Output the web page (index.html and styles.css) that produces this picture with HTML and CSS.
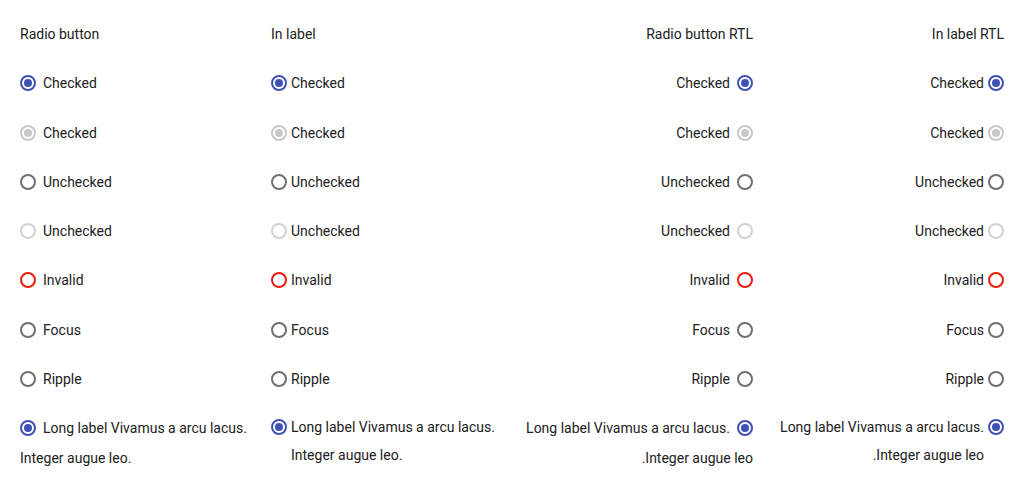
FILE: index.html
```html
<!DOCTYPE html>
<html>
<head>
<meta charset="utf-8">
<link rel="stylesheet" href="styles.css">
</head>
<body>
<div class="grid">
  <section class="col">
    <div class="title">Radio button</div>
    <div class="row"><span class="radio checked"></span><span class="lbl">Checked</span></div>
    <div class="row"><span class="radio checked disabled"></span><span class="lbl">Checked</span></div>
    <div class="row"><span class="radio"></span><span class="lbl">Unchecked</span></div>
    <div class="row"><span class="radio disabled"></span><span class="lbl">Unchecked</span></div>
    <div class="row"><span class="radio invalid"></span><span class="lbl">Invalid</span></div>
    <div class="row"><span class="radio"></span><span class="lbl">Focus</span></div>
    <div class="row"><span class="radio"></span><span class="lbl">Ripple</span></div>
    <div class="long-flow"><span class="radio checked"></span>Long label Vivamus a arcu lacus. Integer augue leo.</div>
  </section>
  <section class="col inlabel">
    <div class="title">In label</div>
    <label class="row"><span class="radio checked"></span><span class="lbl">Checked</span></label>
    <label class="row"><span class="radio checked disabled"></span><span class="lbl">Checked</span></label>
    <label class="row"><span class="radio"></span><span class="lbl">Unchecked</span></label>
    <label class="row"><span class="radio disabled"></span><span class="lbl">Unchecked</span></label>
    <label class="row"><span class="radio invalid"></span><span class="lbl">Invalid</span></label>
    <label class="row"><span class="radio"></span><span class="lbl">Focus</span></label>
    <label class="row"><span class="radio"></span><span class="lbl">Ripple</span></label>
    <label class="long-flex"><span class="radio checked"></span><span class="lbl">Long label Vivamus a arcu lacus. Integer augue leo.</span></label>
  </section>
  <section class="col rtl">
    <div class="title">Radio button RTL</div>
    <div class="row"><span class="radio checked"></span><span class="lbl">Checked</span></div>
    <div class="row"><span class="radio checked disabled"></span><span class="lbl">Checked</span></div>
    <div class="row"><span class="radio"></span><span class="lbl">Unchecked</span></div>
    <div class="row"><span class="radio disabled"></span><span class="lbl">Unchecked</span></div>
    <div class="row"><span class="radio invalid"></span><span class="lbl">Invalid</span></div>
    <div class="row"><span class="radio"></span><span class="lbl">Focus</span></div>
    <div class="row"><span class="radio"></span><span class="lbl">Ripple</span></div>
    <div class="long-flow"><span class="radio checked"></span>Long label Vivamus a arcu lacus. Integer augue leo.</div>
  </section>
  <section class="col inlabel rtl">
    <div class="title">In label RTL</div>
    <label class="row"><span class="radio checked"></span><span class="lbl">Checked</span></label>
    <label class="row"><span class="radio checked disabled"></span><span class="lbl">Checked</span></label>
    <label class="row"><span class="radio"></span><span class="lbl">Unchecked</span></label>
    <label class="row"><span class="radio disabled"></span><span class="lbl">Unchecked</span></label>
    <label class="row"><span class="radio invalid"></span><span class="lbl">Invalid</span></label>
    <label class="row"><span class="radio"></span><span class="lbl">Focus</span></label>
    <label class="row"><span class="radio"></span><span class="lbl">Ripple</span></label>
    <label class="long-flex"><span class="radio checked"></span><span class="lbl">Long label Vivamus a arcu lacus. Integer augue leo.</span></label>
  </section>
</div>
</body>
</html>
```
FILE: styles.css
```css
html, body {
  margin: 0;
  padding: 0;
  background: #ffffff;
}
body {
  font-family: Roboto, "Liberation Sans", sans-serif;
  font-size: 14px;
  color: #212121;
}
.grid {
  display: grid;
  grid-template-columns: repeat(4, 231px);
  column-gap: 20px;
  padding: 20px;
}
.col {
  display: flex;
  flex-direction: column;
}
.rtl {
  direction: rtl;
}
.title {
  line-height: 28px;
  height: 28px;
  margin-bottom: 10.7px;
}
.row {
  display: flex;
  align-items: center;
  height: 49.29px;
}
.radio {
  box-sizing: border-box;
  width: 16px;
  height: 16px;
  border: 2px solid #6f6f6f;
  border-radius: 50%;
  flex: none;
  position: relative;
  margin-inline-end: 7px;
}
.inlabel .radio {
  margin-inline-end: 4px;
}
.radio.checked {
  border-color: #3f51b5;
}
.radio.checked::after {
  content: "";
  position: absolute;
  left: 2px;
  top: 2px;
  width: 8px;
  height: 8px;
  border-radius: 50%;
  background: #3f51b5;
}
.radio.disabled {
  border-color: #d2d2d2;
}
.radio.checked.disabled {
  border-color: #c8c8c8;
}
.radio.checked.disabled::after {
  background: #c8c8c8;
}
.radio.invalid {
  border-color: #ee1a0a;
}
.lbl {
  line-height: 20px;
}
.long-flow {
  padding-top: 9.3px;
  line-height: 30px;
}
.long-flow .radio {
  display: inline-block;
  vertical-align: -3px;
}
.long-flex {
  display: flex;
  align-items: flex-start;
  padding-top: 9.7px;
}
.long-flex .radio {
  margin-top: 6px;
}
.long-flex .lbl {
  line-height: 28px;
}
```
